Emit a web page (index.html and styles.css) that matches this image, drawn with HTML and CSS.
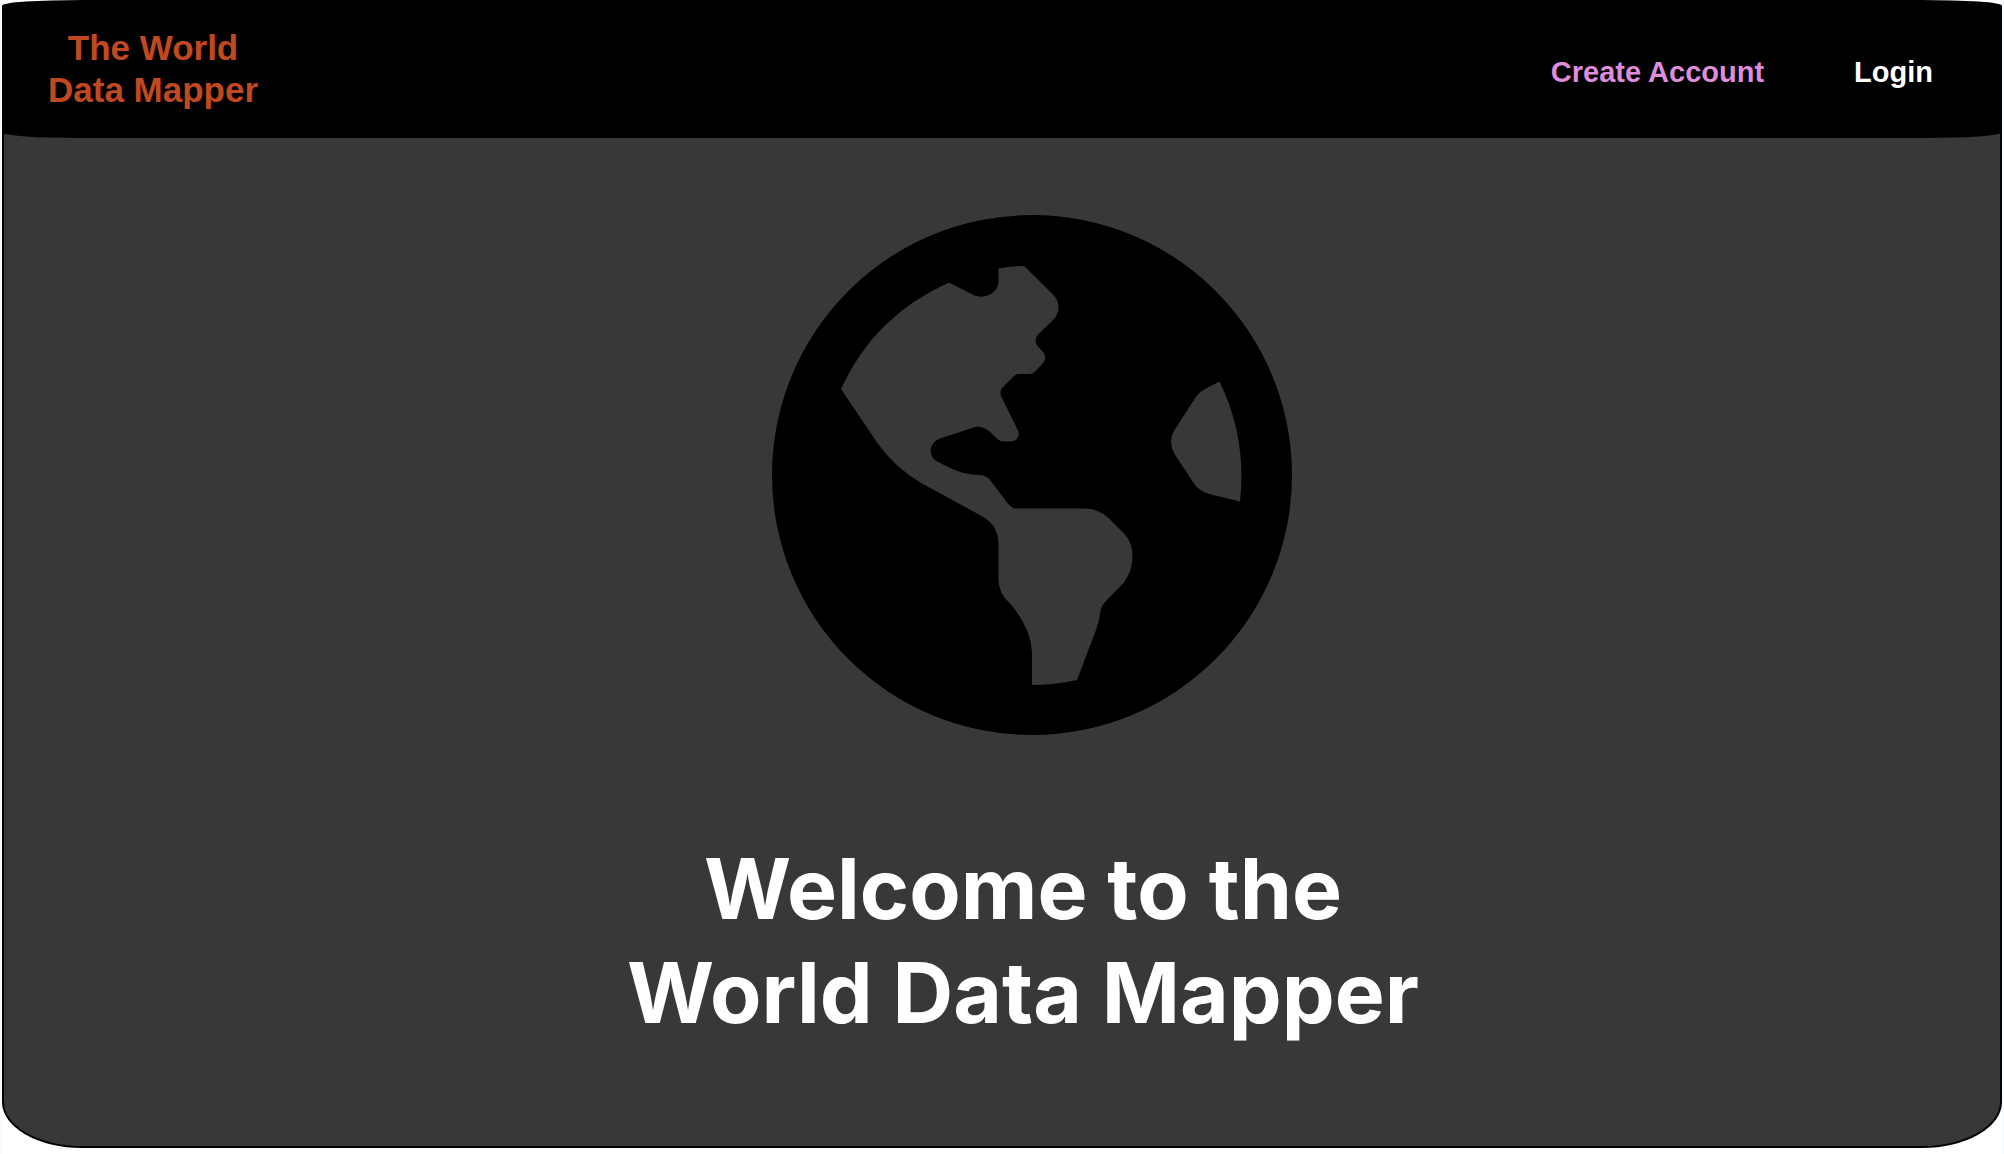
FILE: index.html
```html
<!DOCTYPE html>
<html lang="en">
<head>
  <meta charset="utf-8">
  <meta name="viewport" content="width=device-width, initial-scale=1">
  <title>The World Data Mapper</title>
  <link rel="stylesheet" href="styles.css">
</head>
<body>
  <header class="navbar">
    <a class="brand" href="#">The World<br>Data Mapper</a>
    <nav class="nav-links">
      <button class="nav-button nav-button-create" type="button">Create Account</button>
      <button class="nav-button" type="button">Login</button>
    </nav>
  </header>
  <main class="welcome">
    <svg class="globe" viewBox="0 0 520 520" aria-hidden="true">
      <path fill-rule="evenodd" d="M260 0A260 260 0 1 1 260 520A260 260 0 1 1 260 0Z
        M226.500 53.500Q239 51 252 51L281 79.500Q286.500 85 286.500 92.500Q286.500 99.500 281 105L265.500 120Q261.500 126 265.500 131L271.500 137.500Q275 142.500 271.500 147.500L263 156.500Q261 159 257 159H247Q244 159 242 161L231 172Q227 176 229.500 182L245.500 214.500C249 220 245 226.500 239.500 226.500H232Q228 226.500 225.500 224L217.500 216.500Q209 209.500 200 213L168 223.500C156 228 156 242 166 247L179.500 253.500Q192 260 208 260Q214 260 218.500 265.500L235 287.500Q240 293.500 243.500 293.500H313.500Q326 293.500 336.500 303L353 319.500Q360.500 328 360.500 341Q360.500 355 352.500 367L334 386Q330 390 329 393.500Q327.500 405 324 415L305 465Q283 470 260 470V437Q259 415 241 392L232.500 382.500Q226.500 374 226.500 365V328Q226 311 211.500 302L150 268.500Q122 252 105 227.500L69 174Q102 101 177 67.500L201.500 80C213 85 226.500 78 226.500 66Z
        M447.500 166.500L432 174.500Q428 176.500 424.500 181L402.500 215Q395.500 226.500 402.500 239L422 268.500Q427 276 437 279L468 286.500Q475 223 447.500 166.500Z"/>
    </svg>
    <h1 class="welcome-title">Welcome to the<br>World Data Mapper</h1>
  </main>
</body>
</html>
```
FILE: styles.css
```css
* {
  box-sizing: border-box;
}

body {
  display: flex;
  flex-direction: column;
  min-height: 100vh;
  margin: 0;
  padding: 0 0 6px;
  border: solid #f8fbff;
  border-width: 0 2px;
  background: #fff;
  font-family: "Liberation Sans", Arial, sans-serif;
}

.navbar {
  position: relative;
  z-index: 1;
  display: flex;
  align-items: center;
  justify-content: space-between;
  padding: 27px 69px 27px 46px;
  border-radius: 4%;
  background: #000;
}

.brand {
  color: #c1491f;
  font-size: 35px;
  font-weight: bold;
  line-height: 42px;
  text-align: center;
  text-decoration: none;
}

.nav-links {
  display: flex;
  gap: 90px;
  padding-top: 6px;
}

.nav-button {
  padding: 0;
  border: 0;
  background: none;
  color: #fff;
  font: bold 29px/34px "Liberation Sans", Arial, sans-serif;
  cursor: pointer;
}

.nav-button-create {
  color: #df8cda;
}

.welcome {
  display: flex;
  flex: 1;
  flex-direction: column;
  align-items: center;
  margin-top: -6px;
  padding: 83px 0 90px 42px;
  border: 2px solid #000;
  border-top: 0;
  border-radius: 0 0 80px 80px / 0 0 46px 46px;
  background: #383838;
}

.globe {
  width: 520px;
  max-width: 100%;
  margin-left: 18px;
  fill: #000;
}

.welcome-title {
  margin: 102px 0 0;
  color: #fff;
  font-family: Inter, sans-serif;
  font-size: 84px;
  font-weight: 700;
  line-height: 104px;
  text-align: center;
}
```
